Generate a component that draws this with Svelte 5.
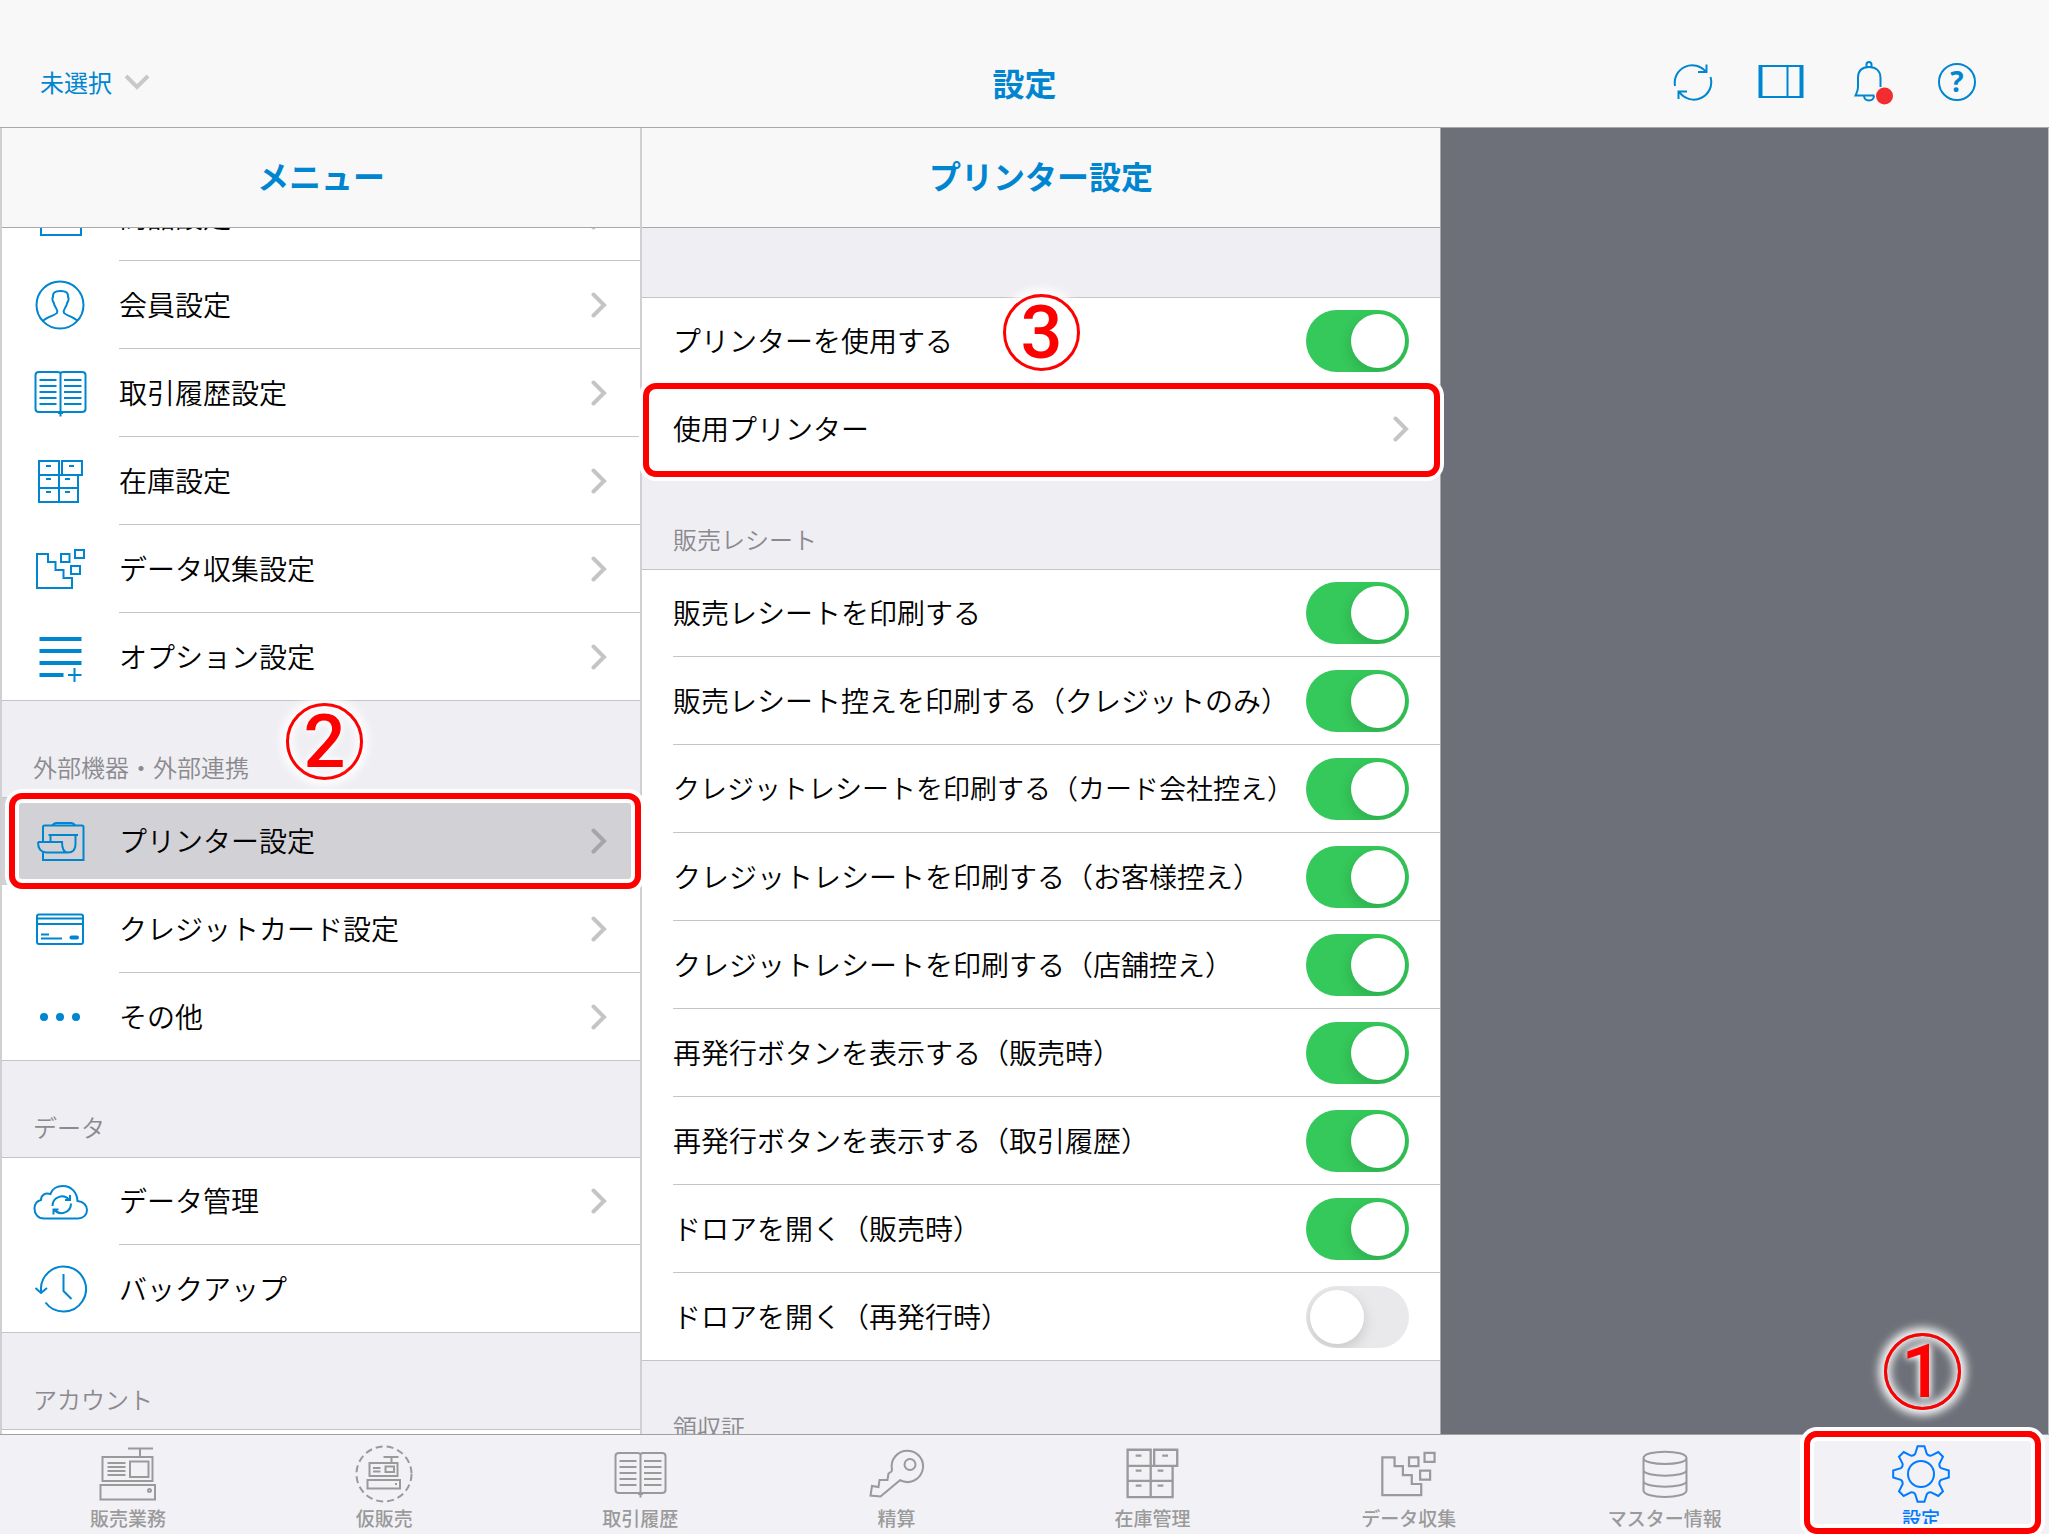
<script lang="ts">
	interface Icon {
		line: string;
		thick?: string;
		weight?: number;
		round?: boolean;
		dash?: string;
	}

	interface MenuItem {
		icon: string;
		label: string;
		arrow?: boolean;
		active?: boolean;
	}

	interface Setting {
		label: string;
		on: boolean;
		small?: boolean;
	}

	interface Tab {
		icon: string;
		label: string;
		view: string;
		active?: boolean;
	}

	const gear = () => {
		const at = (r: number, a: number) =>
			`${(30 + r * Math.sin(a)).toFixed(1)} ${(30 - r * Math.cos(a)).toFixed(1)}`;
		let d = '';
		for (let i = 0; i < 8; i++) {
			const a = (i * Math.PI) / 4;
			d += `${i ? 'L' : 'M'}${at(21, a - 0.28)}L${at(28, a - 0.12)}L${at(28, a + 0.12)}L${at(21, a + 0.28)}`;
			d += `Q${at(19.5, a + 0.39)} ${at(21, a + 0.505)}`;
		}
		return d + 'Z M43 30a13 13 0 1 1-26 0a13 13 0 1 1 26 0';
	};

	const icons: Record<string, Icon> = {
		goods: { line: 'M9 9H49V46H9ZM9 20H49' },
		member: {
			line: 'M51.5 28a23.5 23.5 0 1 1-47 0a23.5 23.5 0 1 1 47 0M11.5 43.5C15 40 23.5 38 25 36C25.6 34.500 25 32.500 24 31C22.500 29 22 27 21.700 25.500C20.300 24 20 20.500 21 20C20.500 16 22.500 14 28.500 14C34.500 14 36.500 16 36 20C37 20.500 36.700 24 35.300 25.500C35 27 34.500 29 33 31C32 32.500 31.400 34.500 32 36C33.500 38 41.500 40 45 43.500'
		},
		book: {
			line: 'M28.5 51.500V9C28.500 7.500 27 7 25.500 7H7Q3.500 7 3.500 10V44Q3.500 47 7 47H50Q53.500 47 53.500 44V10Q53.500 7 50 7H31.500C30 7 28.500 7.500 28.500 9M7.500 15H24.500M7.500 21H24.500M7.500 27H24.500M7.500 33H24.500M7.500 39H24.500M32 15H49.500M32 21H49.500M32 27H49.500M32 33H49.500M32 39H49.500M26 48H31'
		},
		cabinet: {
			line: 'M7 8H27V22H7ZM30 8H50V22H30ZM7 22V49H46V22M7 35H46M27 22V49M27 22H30M14 13H19M37 13H42M14 26H19M33 26H38M14 39H19M33 39H38'
		},
		blocks: {
			line: 'M5 13H16V21H23.500V29H31.500V37H40V47H5ZM29 13H37.500V21H29ZM43 9H52V17H43ZM39 25H48V33H39Z'
		},
		options: {
			line: 'M36 46H49.500M42.500 39V53',
			thick: 'M7.500 10H49.500M7.500 22H49.500M7.500 34H49.500M7.500 46H31.500',
			weight: 4
		},
		printer: {
			line: 'M11 28V13Q11 11.500 12.500 11.500H50Q51.500 11.500 51.500 13V46H11V38.500M20 11.500Q22 9 24 9H39.500Q41.500 9 43.500 11.500M16.500 21H46M18.500 21V28M6 28H30C30 34 31 38.500 36 38.500C41 38.500 43.500 35 43.500 30V21M6 28C6 34 8 38 14 38.500H36'
		},
		card: {
			line: 'M7 13.500H49Q51 13.500 51 15.500V41Q51 43 49 43H7Q5 43 5 41V15.500Q5 13.500 7 13.500ZM5 17.500H51M5 23H51M9 33.500H17M9 37.500H30',
			thick: 'M39.500 36.500H45',
			weight: 4,
			round: true
		},
		more: { line: '', thick: 'M12 28h.01M28 28h.01M44 28h.01', weight: 8, round: true },
		cloud: {
			line: 'M12 44.500C6 44.500 2.500 40 2.500 34.500C2.500 30 5 27 9 26C9 21 13 18.500 18.500 20C20 15 25 12 31 12C39 12 45 18 45.500 27C51 27.500 55 31 55 36C55 41 51 44.500 46 44.500ZM20.500 32A9.500 9.500 0 0 1 37 25.500M38 21V26H33M39 29.500A9.500 9.500 0 0 1 22.500 36M21.500 40.500V35.500H26.500'
		},
		history: {
			line: 'M9.200 31A22.500 22.500 0 1 1 13.500 41.500M3.500 27L9 32L15 27M31.500 13V30L39.500 38'
		},
		register: {
			line: 'M30 4.500H55M42 4.500V13M4.500 13H54.500V37H4.500ZM9.500 19H27.500M9.500 23H27.500M9.500 27H27.500M9.500 31H27.500M32 17.500H50.500V33H32ZM2.500 41H57V55.500H2.500ZM53 46.500a1.500 1.500 0 1 1-3 0a1.500 1.500 0 1 1 3 0'
		},
		draft: {
			line: 'M29.500 13H44.500M37.500 13V19M15.500 19H43.500V32H15.500ZM19 24H26.500M19 27.500H26.500M31.500 22.500H40V28H31.500ZM13.500 36H46V44.500H13.500ZM41 40H43',
			thick: 'M57.500 30a27.500 27.500 0 1 1-55 0a27.500 27.500 0 1 1 55 0',
			weight: 2,
			dash: '7 4'
		},
		key: {
			line: 'M34 36.200A15.700 15.700 0 1 0 26 25.500L25.500 27.500L22.500 29.500L21.500 36L13.500 36L12.500 43L6 42L4.500 51.500L14.500 52.500ZM49.500 20.500a5.500 5.500 0 1 1-11 0a5.500 5.500 0 1 1 11 0'
		},
		database: {
			line: 'M8.500 14C8.500 5.500 51.500 5.500 51.500 14C51.500 22 8.500 22 8.500 14V46.500C8.500 55 51.500 55 51.500 46.500V14M8.500 26C8.500 33.500 51.500 33.500 51.500 26M8.500 37C8.500 44.500 51.500 44.500 51.500 37'
		},
		gear: { line: gear() }
	};

	const menu: { title: string; items: MenuItem[] }[] = [
		{
			title: '',
			items: [
				{ icon: 'goods', label: '商品設定', arrow: true },
				{ icon: 'member', label: '会員設定', arrow: true },
				{ icon: 'book', label: '取引履歴設定', arrow: true },
				{ icon: 'cabinet', label: '在庫設定', arrow: true },
				{ icon: 'blocks', label: 'データ収集設定', arrow: true },
				{ icon: 'options', label: 'オプション設定', arrow: true }
			]
		},
		{
			title: '外部機器・外部連携',
			items: [
				{ icon: 'printer', label: 'プリンター設定', arrow: true, active: true },
				{ icon: 'card', label: 'クレジットカード設定', arrow: true },
				{ icon: 'more', label: 'その他', arrow: true }
			]
		},
		{
			title: 'データ',
			items: [
				{ icon: 'cloud', label: 'データ管理', arrow: true },
				{ icon: 'history', label: 'バックアップ' }
			]
		},
		{ title: 'アカウント', items: [] }
	];

	let usePrinter = $state(true);

	let receipt: Setting[] = $state([
		{ label: '販売レシートを印刷する', on: true },
		{ label: '販売レシート控えを印刷する（クレジットのみ）', on: true },
		{ label: 'クレジットレシートを印刷する（カード会社控え）', on: true, small: true },
		{ label: 'クレジットレシートを印刷する（お客様控え）', on: true },
		{ label: 'クレジットレシートを印刷する（店舗控え）', on: true },
		{ label: '再発行ボタンを表示する（販売時）', on: true },
		{ label: '再発行ボタンを表示する（取引履歴）', on: true },
		{ label: 'ドロアを開く（販売時）', on: true },
		{ label: 'ドロアを開く（再発行時）', on: false }
	]);

	const tabs: Tab[] = [
		{ icon: 'register', label: '販売業務', view: '0 0 60 60' },
		{ icon: 'draft', label: '仮販売', view: '0 0 60 60' },
		{ icon: 'book', label: '取引履歴', view: '-2 -2 60 60' },
		{ icon: 'key', label: '精算', view: '0 0 60 60' },
		{ icon: 'cabinet', label: '在庫管理', view: '3 3 52 52' },
		{ icon: 'blocks', label: 'データ収集', view: '2 1 54 54' },
		{ icon: 'database', label: 'マスター情報', view: '0 0 60 60' },
		{ icon: 'gear', label: '設定', view: '0 0 60 60', active: true }
	];
</script>

{#snippet drawing(name: string, view: string)}
	{@const icon = icons[name]}
	<svg class="icon" viewBox={view} aria-hidden="true">
		<path d={icon.line} />
		{#if icon.thick}
			<path
				d={icon.thick}
				stroke-width={icon.weight}
				stroke-linecap={icon.round ? 'round' : 'butt'}
				stroke-dasharray={icon.dash}
			/>
		{/if}
	</svg>
{/snippet}

{#snippet chevron()}
	<svg class="chevron" viewBox="0 0 16 26" aria-hidden="true"><path d="M2.500 2.500L13 13L2.500 23.500" /></svg>
{/snippet}

<div class="app">
	<header class="top">
		<div class="shop">
			<select aria-label="店舗">
				<option>未選択</option>
			</select>
			<svg class="down" viewBox="0 0 26 16" aria-hidden="true"><path d="M2 2L13 13L24 2" /></svg>
		</div>
		<h1>設定</h1>
		<div class="actions">
			<button aria-label="更新">
				<svg viewBox="0 0 48 48">
					<path d="M6 28A17.500 17.500 0 0 1 37 14M37.500 6.500V14H29M41.500 19A17.500 17.500 0 0 1 10 33.500M9.500 41V33.500H18" />
				</svg>
			</button>
			<button aria-label="画面分割">
				<svg viewBox="0 0 48 48">
					<path d="M2 8H46M2 39H46M30.500 8V39" />
					<path d="M3.500 7V40M44.500 7V40" stroke-width="4" />
				</svg>
			</button>
			<button aria-label="お知らせ">
				<svg viewBox="0 0 48 48">
					<path d="M21.500 9V6.500A2.500 2.500 0 0 1 26.500 6.500V9M35.500 29V20C35.500 13 31 9 24 9C17 9 13 13 13 20V29C13 33 11.500 35 10.500 37.500H29.500M19 38C19.500 44 28.500 44 29 38" />
					<circle class="dot" cx="39.500" cy="38" r="8.500" />
				</svg>
			</button>
			<button aria-label="ヘルプ">
				<svg viewBox="0 0 48 48">
					<circle cx="24" cy="24" r="18" />
					<text x="24" y="34" text-anchor="middle">?</text>
				</svg>
			</button>
		</div>
	</header>

	<main>
		<section class="panel side">
			<h2>メニュー</h2>
			<nav class="scroll scrolled">
				{#each menu as group}
					{#if group.title}
						<div class="caption">
							<h3>{group.title}</h3>
							{#if group.items.some((item) => item.active)}
								<span class="step step-two">2</span>
							{/if}
						</div>
					{/if}
					<div class="group">
						{#each group.items as item}
							<button class="row" class:active={item.active}>
								<span class="lead">{@render drawing(item.icon, '0 0 56 56')}</span>
								<span class="body">
									<span class="label">{item.label}</span>
									{#if item.arrow}{@render chevron()}{/if}
								</span>
								{#if item.active}<span class="frame"></span>{/if}
							</button>
						{/each}
					</div>
				{/each}
			</nav>
		</section>

		<section class="panel detail">
			<h2>プリンター設定</h2>
			<div class="scroll">
				<div class="spacer"></div>
				<div class="group">
					<label class="row">
						<span class="body">
							<span class="label">プリンターを使用する</span>
							<input type="checkbox" role="switch" bind:checked={usePrinter} />
						</span>
						<span class="step step-three">3</span>
					</label>
					<button class="row">
						<span class="body">
							<span class="label">使用プリンター</span>
							{@render chevron()}
						</span>
						<span class="frame"></span>
					</button>
				</div>
				<div class="caption"><h3>販売レシート</h3></div>
				<div class="group">
					{#each receipt as setting}
						<label class="row">
							<span class="body">
								<span class="label" class:small={setting.small}>{setting.label}</span>
								<input type="checkbox" role="switch" bind:checked={setting.on} />
							</span>
						</label>
					{/each}
				</div>
				<div class="caption"><h3>領収証</h3></div>
			</div>
		</section>

		<div class="blank"></div>
	</main>

	<nav class="tabs">
		{#each tabs as tab}
			<button class="tab" class:current={tab.active}>
				{@render drawing(tab.icon, tab.view)}
				<span>{tab.label}</span>
				{#if tab.active}
					<span class="frame"></span>
					<span class="step step-one">1</span>
				{/if}
			</button>
		{/each}
	</nav>
</div>

<style>
	:global(body) {
		margin: 0;
	}

	.app {
		--blue: #0085d0;
		--line: #c4c4c7;
		display: flex;
		flex-direction: column;
		height: 100vh;
		overflow: hidden;
		font-family: 'Noto Sans CJK JP', 'Noto Sans', sans-serif;
		color: #000;
		background: #f8f8f8;
	}

	.app * {
		box-sizing: border-box;
	}

	button,
	select {
		margin: 0;
		padding: 0;
		border: 0;
		background: none;
		font: inherit;
		color: inherit;
		text-align: left;
	}

	svg {
		display: block;
		flex: none;
		fill: none;
		stroke: currentColor;
		stroke-width: 2;
	}

	h1,
	h2,
	h3 {
		margin: 0;
	}

	h1,
	h2 {
		font-size: 32px;
		line-height: 40px;
		font-weight: 700;
		color: var(--blue);
		text-align: center;
	}

	/* top bar */
	.top {
		flex: none;
		display: grid;
		grid-template-columns: 1fr auto 1fr;
		align-items: center;
		height: 128px;
		padding: 36px 40px 0;
		border-bottom: 1px solid #a8a8aa;
		color: var(--blue);
	}
	.shop {
		display: flex;
		align-items: center;
		gap: 12px;
	}
	.shop select {
		appearance: none;
		font-size: 24px;
		line-height: 32px;
	}
	.down {
		width: 26px;
		height: 16px;
		color: #c8c8c8;
		stroke-width: 4;
	}
	.actions {
		display: flex;
		justify-content: flex-end;
		padding-right: 8px;
	}
	.actions button {
		padding: 0 20px;
	}
	.actions svg {
		width: 48px;
		height: 48px;
	}
	.actions text {
		fill: currentColor;
		stroke: none;
		font-family: 'Open Sans', 'Noto Sans', sans-serif;
		font-size: 28px;
		font-weight: 700;
	}
	.dot {
		fill: #f22d30;
		stroke: none;
	}

	/* columns */
	main {
		flex: 1;
		min-height: 0;
		display: grid;
		grid-template-columns: 640fr 799fr 607fr;
		grid-template-rows: minmax(0, 1fr);
		border-left: 2px solid #d0d0d2;
		border-right: 1px solid #c0c0c2;
	}
	.panel {
		display: flex;
		flex-direction: column;
		min-width: 0;
		min-height: 0;
		background: #efeef3;
	}
	.side {
		border-right: 2px solid #d0d0d2;
	}
	.detail {
		border-right: 1px solid #a8a8aa;
	}
	.panel h2 {
		flex: none;
		padding: 27px 0 32px;
		border-bottom: 1px solid #a8a8aa;
		background: #f8f8f8;
	}
	.scroll {
		flex: 1;
		min-height: 0;
		overflow-y: clip;
	}
	.scrolled .group:first-child {
		margin-top: -55px;
	}
	.blank {
		background: #6d7078;
	}
	.spacer {
		height: 70px;
		border-bottom: 1px solid var(--line);
	}

	.caption {
		position: relative;
		display: flex;
		align-items: flex-end;
		height: 97px;
		padding: 0 31px 16px;
		border-bottom: 1px solid var(--line);
	}
	.caption h3 {
		font-size: 24px;
		line-height: 28px;
		font-weight: 350;
		color: #8a8a8f;
	}

	/* rows */
	.group {
		background: #fff;
	}
	.group:last-child {
		height: 100px;
	}
	.row {
		position: relative;
		display: flex;
		width: 100%;
		height: 88px;
	}
	.row:first-child {
		height: 87px;
	}
	.scrolled .group:first-child .row {
		height: 88px;
	}
	.row:last-child {
		border-bottom: 1px solid var(--line);
	}
	.row:last-child .body {
		border-bottom: 0;
	}
	.row.active {
		background: #d1d1d6;
	}
	.row.active .body {
		border-color: transparent;
	}
	.lead {
		flex: none;
		display: flex;
		align-items: center;
		width: 117px;
		padding-left: 30px;
		color: var(--blue);
	}
	.lead .icon {
		width: 56px;
		height: 56px;
	}
	.body {
		flex: 1;
		display: flex;
		align-items: center;
		justify-content: space-between;
		padding-right: 33px;
		border-bottom: 1px solid var(--line);
	}
	.detail .body {
		margin-left: 31px;
		padding-right: 31px;
	}
	.label {
		padding-bottom: 2px;
		font-size: 28px;
		line-height: 40px;
		font-weight: 350;
		white-space: nowrap;
	}
	.label.small {
		font-size: 27px;
	}
	.chevron {
		width: 16px;
		height: 26px;
		color: #c5c5c8;
		stroke-width: 4;
		stroke-linecap: round;
	}
	.active .chevron {
		color: #a5a5aa;
	}

	input[type='checkbox'] {
		flex: none;
		appearance: none;
		width: 103px;
		height: 62px;
		margin: 0;
		padding: 4px;
		border-radius: 31px;
		background: #e9e9eb;
		overflow: hidden;
	}
	input[type='checkbox']::before {
		content: '';
		display: block;
		width: 54px;
		height: 54px;
		border-radius: 50%;
		background: #fff;
		box-shadow: 0 5px 14px rgba(0, 0, 0, 0.15);
	}
	input[type='checkbox']:checked {
		background: #35c85a;
	}
	input[type='checkbox']:checked::before {
		margin-left: auto;
	}

	/* tab bar */
	.tabs {
		flex: none;
		display: grid;
		grid-template-columns: repeat(8, 1fr);
		height: 100px;
		border-top: 1px solid #a0a0a3;
		background: #f2f1f6;
	}
	.tab {
		position: relative;
		display: flex;
		flex-direction: column;
		align-items: center;
		padding-top: 9px;
		color: #9a9a9a;
		font-size: 19px;
		line-height: 28px;
		font-weight: 500;
	}
	.tab .icon {
		width: 60px;
		height: 60px;
	}
	.tab.current {
		color: #007aff;
	}

	/* numbered guide marks, drawn over the screen */
	.frame {
		position: absolute;
		inset: -5px -1px -4px 7px;
		border: 6px solid #f00;
		border-radius: 13px;
		box-shadow:
			0 0 0 4px #fff,
			inset 0 0 0 4px #fff;
		pointer-events: none;
	}
	.detail .frame {
		inset: -2px 0 -5px 1px;
	}
	.tab .frame {
		inset: -4px 8px 0 11px;
	}
	.step {
		position: absolute;
		display: flex;
		align-items: center;
		justify-content: center;
		width: 77px;
		height: 77px;
		border: 3px solid #f00;
		border-radius: 50%;
		box-shadow:
			0 0 10px 5px #fff,
			inset 0 0 10px 3px #fff;
		color: #f00;
		font-family: Roboto, 'Liberation Sans', sans-serif;
		font-size: 74px;
		line-height: 77px;
		font-weight: 500;
		text-shadow:
			0 0 6px #fff,
			0 0 10px #fff;
		pointer-events: none;
	}
	.step-one {
		top: -102px;
		left: 91px;
	}
	.step-two {
		top: 2px;
		left: 284px;
	}
	.step-three {
		top: -4px;
		left: 361px;
	}
</style>
